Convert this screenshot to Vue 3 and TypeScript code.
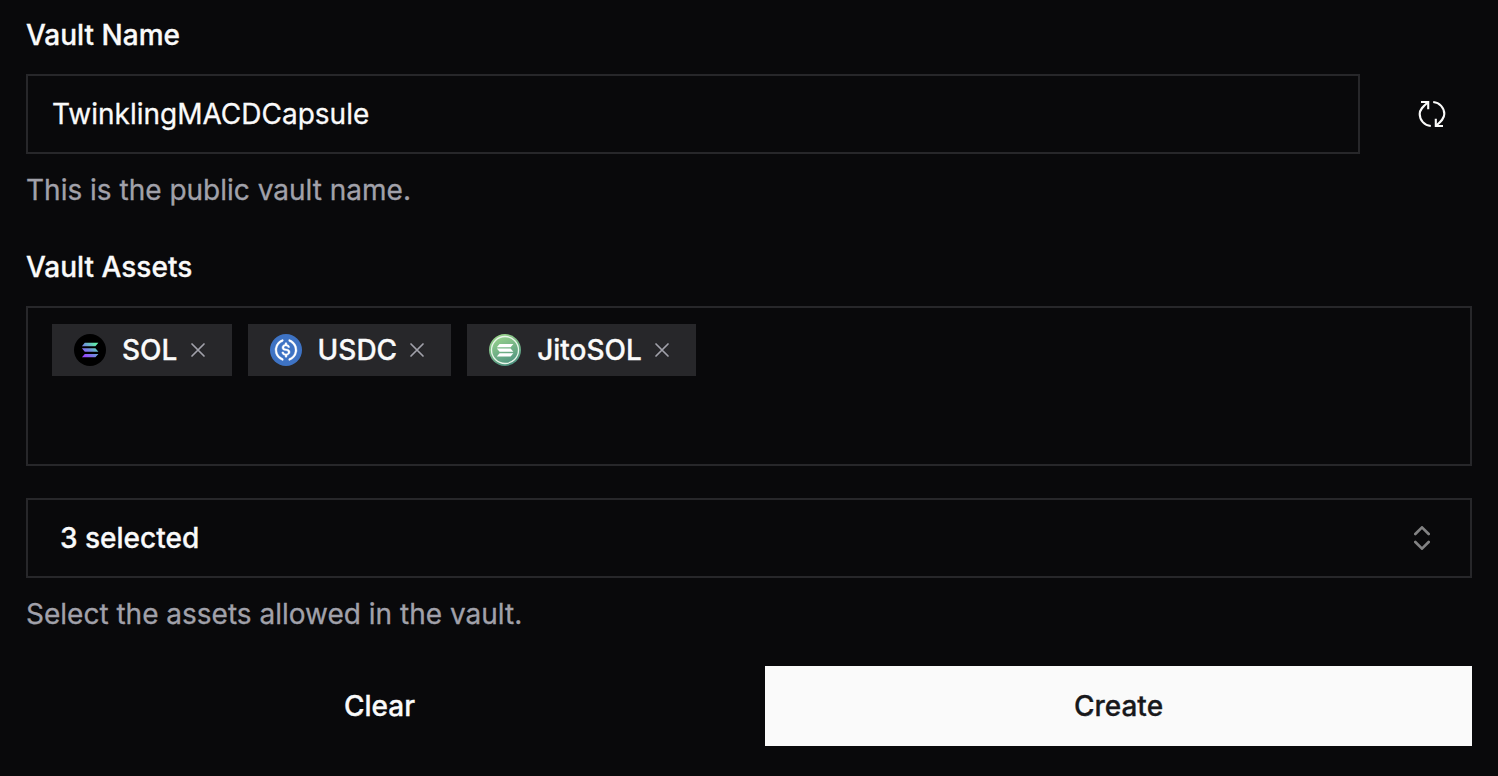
<script setup lang="ts">
import { ref } from 'vue'

type Asset = 'SOL' | 'USDC' | 'JitoSOL'

const name = ref('TwinklingMACDCapsule')
const assets = ref<Asset[]>(['SOL', 'USDC', 'JitoSOL'])

function remove(asset: Asset) {
  assets.value = assets.value.filter((a) => a !== asset)
}

function clear() {
  name.value = ''
  assets.value = []
}
</script>

<template>
  <form class="form" @submit.prevent>
    <label class="label" for="vault-name">Vault Name</label>
    <div class="name-row">
      <input id="vault-name" v-model="name" class="input" type="text" spellcheck="false" />
      <button class="refresh" type="button" aria-label="Generate name">
        <svg width="32" height="32" viewBox="0 0 32 32" fill="none" stroke="currentColor" stroke-width="2.1">
          <path d="M14.8 28C8.4 27.4 3.7 22.2 3.7 16C3.7 11.4 7 8.4 12 4.2" />
          <path d="M5 4H12.2V11.2" />
          <path d="M17.2 4C23.6 4.6 28.3 9.8 28.3 16C28.3 20.6 25 23.6 20 27.8" />
          <path d="M27 28H19.8V20.8" />
        </svg>
      </button>
    </div>
    <p class="hint">This is the public vault name.</p>

    <div class="label second">Vault Assets</div>
    <div class="asset-box">
      <span v-for="asset in assets" :key="asset" class="chip">
        <svg v-if="asset === 'SOL'" class="coin" viewBox="0 0 32 32">
          <defs>
            <linearGradient id="sol" gradientUnits="userSpaceOnUse" x1="9" y1="24" x2="23" y2="8">
              <stop offset="0.1" stop-color="#9945ff" />
              <stop offset="0.5" stop-color="#6f90dc" />
              <stop offset="0.9" stop-color="#5ff0a8" />
            </linearGradient>
          </defs>
          <circle cx="16" cy="16" r="16" fill="#000" />
          <path fill="url(#sol)" d="M10.8 8.8H24.4L21.4 12.2H7.9ZM7.9 14.3H21.4L24.4 17.7H10.8ZM10.8 19.9H24.4L21.4 23.3H7.9Z" />
        </svg>
        <svg v-else-if="asset === 'USDC'" class="coin" viewBox="0 0 32 32">
          <circle cx="16" cy="16" r="16" fill="#3e73c4" />
          <g fill="#fff" stroke="#fff" stroke-width="0.4">
            <path d="M20.022 18.124c0-2.124-1.28-2.852-3.84-3.156-1.828-.243-2.193-.728-2.193-1.578 0-.85.61-1.396 1.828-1.396 1.097 0 1.707.364 2.011 1.275a.458.458 0 0 0 .427.303h.975a.416.416 0 0 0 .427-.425v-.06a3.04 3.04 0 0 0-2.743-2.489V9.142c0-.243-.183-.425-.487-.486h-.915c-.243 0-.426.182-.487.486v1.396c-1.829.242-2.986 1.456-2.986 2.974 0 2.002 1.218 2.791 3.778 3.095 1.707.303 2.255.668 2.255 1.639 0 .97-.853 1.638-2.011 1.638-1.585 0-2.133-.667-2.316-1.578-.06-.242-.244-.364-.427-.364h-1.036a.416.416 0 0 0-.426.425v.06c.243 1.518 1.219 2.61 3.23 2.914v1.457c0 .242.183.425.487.485h.915c.243 0 .426-.182.487-.485V21.34c1.829-.303 3.047-1.578 3.047-3.217z" />
            <path d="M12.892 24.497c-4.754-1.7-7.192-6.98-5.424-11.653.914-2.55 2.925-4.491 5.424-5.402.244-.121.365-.303.365-.607v-.85c0-.242-.121-.424-.365-.485-.061 0-.183 0-.244.06a10.895 10.895 0 0 0-7.13 13.717c1.096 3.4 3.717 6.01 7.13 7.102.244.121.488 0 .548-.243.061-.06.061-.122.061-.243v-.85c0-.182-.182-.424-.365-.546zm6.46-18.936c-.244-.122-.488 0-.548.242-.061.061-.061.122-.061.243v.85c0 .243.182.485.365.607 4.754 1.7 7.192 6.98 5.424 11.653-.914 2.55-2.925 4.491-5.424 5.402-.244.121-.365.303-.365.607v.85c0 .242.121.424.365.485.061 0 .183 0 .244-.06a10.895 10.895 0 0 0 7.13-13.717c-1.096-3.46-3.778-6.07-7.13-7.162z" />
          </g>
        </svg>
        <svg v-else class="coin" viewBox="0 0 32 32">
          <defs>
            <linearGradient id="jito" x1="0.3" y1="0" x2="0.7" y2="1">
              <stop offset="0" stop-color="#9bd58c" />
              <stop offset="1" stop-color="#4b9080" />
            </linearGradient>
          </defs>
          <circle cx="16" cy="16" r="16" fill="url(#jito)" />
          <circle cx="16" cy="16" r="13.5" fill="none" stroke="#e9f6ea" stroke-width="1.3" />
          <path fill="#fff" d="M10.6 10H24.4L21.6 13.2H7.8ZM7.8 14.6H21.6L24.4 17.8H10.6ZM10.6 19.3H24.4L21.6 22.5H7.8Z" />
        </svg>
        <span class="chip-name">{{ asset }}</span>
        <button class="remove" type="button" :aria-label="`Remove ${asset}`" @click="remove(asset)">
          <svg width="24" height="24" viewBox="0 0 24 24" fill="none" stroke="currentColor" stroke-width="1.7" stroke-linecap="round">
            <path d="M18 6 6 18M6 6l12 12" />
          </svg>
        </button>
      </span>
    </div>
    <button class="select" type="button">
      <span>{{ assets.length }} selected</span>
      <svg class="chevrons" width="32" height="32" viewBox="0 0 24 24" fill="none" stroke="currentColor" stroke-width="2" stroke-linecap="round" stroke-linejoin="round">
        <path d="m7 15 5 5 5-5" />
        <path d="m7 9 5-5 5 5" />
      </svg>
    </button>
    <p class="hint">Select the assets allowed in the vault.</p>

    <div class="actions">
      <button class="action" type="button" @click="clear">Clear</button>
      <button class="action primary" type="submit">Create</button>
    </div>
  </form>
</template>

<style>
body {
  background: #09090b;
}
</style>

<style scoped>
.form {
  box-sizing: border-box;
  height: 776px;
  padding: 15px 26px 0;
  background: #09090b;
  color: #fafafa;
  font-family: Inter, "Liberation Sans", sans-serif;
  font-size: 28px;
  line-height: 40px;
  -webkit-text-stroke: 0.3px currentColor;
}
.form * {
  box-sizing: border-box;
}
button,
input {
  margin: 0;
  padding: 0;
  border: 0;
  border-radius: 0;
  background: none;
  color: inherit;
  font: inherit;
  outline: none;
}
svg {
  display: block;
  flex: none;
}
.label {
  display: block;
  font-weight: 500;
}
.second {
  margin-top: 37px;
}
.name-row {
  display: flex;
  gap: 32px;
  margin-top: 19px;
}
.input {
  flex: 1;
  height: 80px;
  padding: 0 24px;
  border: 2px solid #27272a;
}
.refresh {
  display: flex;
  align-items: center;
  justify-content: center;
  width: 80px;
  height: 80px;
}
.hint {
  margin: 16px 0 0;
  color: #a1a1aa;
}
.asset-box {
  display: flex;
  align-items: flex-start;
  gap: 16px;
  height: 160px;
  margin-top: 19px;
  padding: 16px 24px;
  border: 2px solid #27272a;
}
.chip {
  display: flex;
  align-items: center;
  height: 52px;
  padding: 0 22px;
  background: #27272a;
  font-weight: 500;
}
.chip:first-child .chip-name {
  min-width: 55.6px;
}
.coin {
  width: 32px;
  height: 32px;
  margin-right: 16px;
}
.remove {
  margin-left: 8px;
  color: #a1a1aa;
}
.select {
  display: flex;
  align-items: center;
  justify-content: space-between;
  width: 100%;
  height: 80px;
  margin-top: 32px;
  padding: 0 32px;
  border: 2px solid #27272a;
  font-weight: 500;
}
.chevrons {
  opacity: 0.5;
}
.actions {
  display: grid;
  grid-template-columns: 1fr 1fr;
  gap: 32px;
  margin-top: 32px;
}
.action {
  height: 80px;
  font-weight: 500;
}
.primary {
  background: #fafafa;
  color: #18181b;
}
</style>
